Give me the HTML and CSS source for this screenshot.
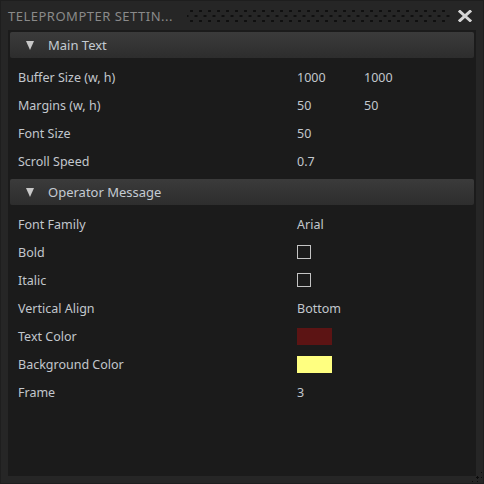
FILE: index.html
```html
<!DOCTYPE html>
<html lang="en">
<head>
    <meta charset="UTF-8">
    <meta name="viewport" content="width=device-width, initial-scale=1.0">
    <title>Teleprompter Settings</title>
    <link rel="stylesheet" href="styles.css">
</head>
<body>
    <div class="window">
        <div class="titlebar">
            <span class="title">TELEPROMPTER SETTIN...</span>
            <div class="grip"></div>
            <svg class="close" width="14" height="12" viewBox="0 0 14 12">
                <path d="M2 1.5 L12 10.5 M12 1.5 L2 10.5" stroke="#d6d6d6" stroke-width="3" stroke-linecap="square"/>
            </svg>
        </div>
        <div class="content">
            <div class="section">
                <div class="section-header"><span class="arrow"></span>Main Text</div>
                <div class="rows">
                    <div class="row"><span class="label">Buffer Size (w, h)</span><span class="value">1000</span><span class="value">1000</span></div>
                    <div class="row"><span class="label">Margins (w, h)</span><span class="value">50</span><span class="value">50</span></div>
                    <div class="row"><span class="label">Font Size</span><span class="value">50</span></div>
                    <div class="row"><span class="label">Scroll Speed</span><span class="value">0.7</span></div>
                </div>
            </div>
            <div class="section">
                <div class="section-header"><span class="arrow"></span>Operator Message</div>
                <div class="rows">
                    <div class="row"><span class="label">Font Family</span><span class="value">Arial</span></div>
                    <div class="row"><span class="label">Bold</span><span class="value"><span class="checkbox"></span></span></div>
                    <div class="row"><span class="label">Italic</span><span class="value"><span class="checkbox"></span></span></div>
                    <div class="row"><span class="label">Vertical Align</span><span class="value">Bottom</span></div>
                    <div class="row"><span class="label">Text Color</span><span class="value"><span class="swatch text-color"></span></span></div>
                    <div class="row"><span class="label">Background Color</span><span class="value"><span class="swatch bg-color"></span></span></div>
                    <div class="row"><span class="label">Frame</span><span class="value">3</span></div>
                </div>
            </div>
        </div>
        <div class="resize-grip"></div>
    </div>
</body>
</html>
```

FILE: styles.css
```css
* {
    box-sizing: border-box;
    margin: 0;
    padding: 0;
}

body {
    font-family: "Noto Sans", "Open Sans", sans-serif;
    font-size: 12.5px;
    background-color: #252525;
}

.window {
    position: relative;
    width: 484px;
    height: 484px;
    display: flex;
    flex-direction: column;
    background: #262626;
    border: 1px solid #1e1e1e;
}

.titlebar {
    height: 29px;
    display: flex;
    align-items: center;
    padding: 0 11px 0 7px;
}

.title {
    color: #8a8a8a;
    font-size: 13px;
    letter-spacing: 0.5px;
}

.grip {
    flex: 1;
    height: 14px;
    margin: 0 7px 0 14px;
    background-image:
        radial-gradient(circle, #0f0f0f 1.1px, transparent 1.4px),
        radial-gradient(circle, #0f0f0f 1.1px, transparent 1.4px);
    background-size: 9px 10px, 9px 10px;
    background-position: 0 -3px, 4.5px 2px;
}

.content {
    flex: 1;
    margin: 0 7px 7px;
    padding: 2px;
    background: #1b1b1b;
}

.section-header {
    height: 26px;
    display: flex;
    align-items: center;
    padding-left: 16px;
    color: #c4cbd2;
    font-size: 13px;
    background: linear-gradient(#3b3b3b, #2d2d2d);
    border-radius: 2px;
}

.arrow {
    width: 0;
    height: 0;
    border-left: 4.5px solid transparent;
    border-right: 4.5px solid transparent;
    border-top: 9px solid #c8c8c8;
    margin-right: 14px;
}

.rows {
    padding: 5px 0 4px 8px;
}

.row {
    height: 28px;
    display: flex;
    align-items: center;
    color: #c2c7cd;
}

.label {
    width: 279px;
}

.value {
    width: 67px;
    display: flex;
    align-items: center;
}

.checkbox {
    width: 14px;
    height: 14px;
    border: 1px solid #c4c4c4;
}

.swatch {
    width: 35px;
    height: 17px;
}

.text-color {
    background: #5c1414;
}

.bg-color {
    background: #ffff80;
}

.resize-grip {
    position: absolute;
    right: 1px;
    bottom: 1px;
    width: 12px;
    height: 12px;
    background-image: radial-gradient(circle, #0c0c0c 1.1px, transparent 1.4px);
    background-size: 5px 5px;
    clip-path: polygon(100% 0, 100% 100%, 0 100%);
}
```
